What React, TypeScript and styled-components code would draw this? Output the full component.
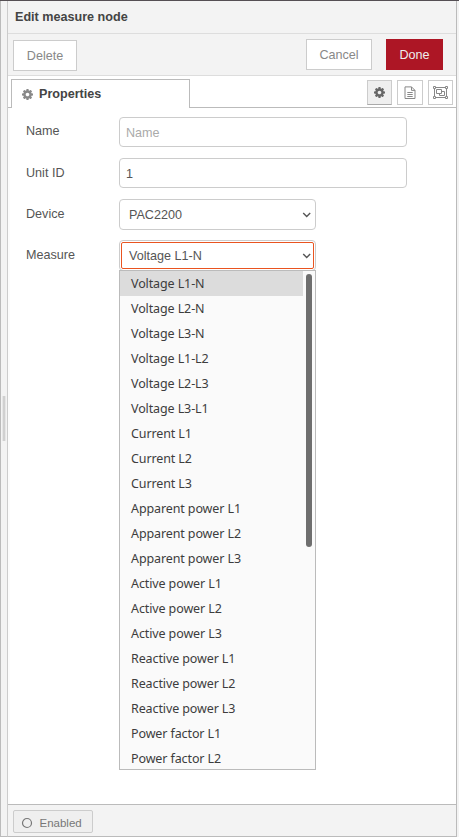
import React from "react";
import styled, { createGlobalStyle, css } from "styled-components";

const GlobalStyle = createGlobalStyle`
  * { box-sizing: border-box; }
  html, body { margin: 0; padding: 0; background: #f3f3f3; }
  body { font: 12.6px/20px "Liberation Sans", Arial, sans-serif; color: #555; overflow: hidden; }
  input, button { font: inherit; color: inherit; margin: 0; outline: none; }
`;

const Page = styled.div`
  display: flex;
  width: 459px;
  height: 837px;
  border-top: 1px solid #554f54;
  background: #f3f3f3;
`;

const Separator = styled.div`
  display: flex;
  align-items: center;
  width: 7px;
  border-left: 1px solid #bbb;
  border-bottom: 1px solid #bbb;
  padding-left: 1px;
`;

const Grip = styled.div`
  width: 4px;
  height: 45px;
  border: solid #e6e6e6;
  border-width: 0 1px;
  background: #d0d0d0;
`;

const Tray = styled.main`
  display: flex;
  flex-direction: column;
  width: 450px;
  border: 1px solid #bbb;
  border-left-color: #ccc;
  border-top: 0;
  background: #fff;
`;

const Header = styled.header`
  height: 33px;
  padding: 6px 7px;
  border-bottom: 1px solid #ddd;
  background: #f3f3f3;
  font-weight: bold;
  color: #444;
`;

const Toolbar = styled.div`
  display: flex;
  height: 42px;
  padding: 5px 13px 0 5px;
  border-bottom: 1px solid #ddd;
  background: #f3f3f3;
`;

const Button = styled.button<{ $width: number; $primary?: boolean; $side?: "left" | "right" }>`
  width: ${(p) => p.$width}px;
  height: 31px;
  padding: 0;
  border: 1px solid ${(p) => (p.$primary ? "#ad1625" : "#ccc")};
  background: ${(p) => (p.$primary ? "#ad1625" : "#fff")};
  color: ${(p) => (p.$primary ? "#eee" : "#888")};
  ${(p) => p.$side === "left" && css`margin: 1px auto 0 0;`}
  ${(p) => p.$side === "right" && css`margin-left: 14px;`}
`;

const TabBar = styled.div`
  display: flex;
  height: 32px;
  padding: 3px 3px 0 3px;
  box-shadow: inset 0 -1px #bbb;
`;

const Tab = styled.div`
  display: flex;
  align-items: center;
  gap: 6px;
  width: 179px;
  height: 29px;
  margin-right: auto;
  padding-left: 10px;
  border: 1px solid #bbb;
  border-bottom: 0;
  background: #fff;
  font-weight: bold;
  color: #444;
  svg { color: #888; }
`;

const IconButton = styled.button<{ $selected?: boolean; $wide?: boolean }>`
  display: flex;
  align-items: center;
  justify-content: center;
  width: ${(p) => (p.$wide ? 26 : 25)}px;
  height: 25px;
  margin: 1px 0 0 5px;
  padding: 0;
  border: 1px solid #ccc;
  border-bottom-color: ${(p) => (p.$selected ? "#aaa" : "#ccc")};
  background: ${(p) => (p.$selected ? "#efefef" : "#fff")};
  color: ${(p) => (p.$selected ? "#666" : "#888")};
`;

const Form = styled.div`
  flex: 1;
  padding: 9px 18px 0;
  box-shadow: inset 2px 0 #fcfcfc;
`;

const Row = styled.div<{ $height: number }>`
  display: flex;
  height: ${(p) => p.$height}px;
`;

const Label = styled.label`
  width: 93px;
  padding-top: 4px;
  ${Row} + ${Row} & { padding-top: 5px; }
`;

const Input = styled.input`
  width: 288px;
  height: 30px;
  padding: 2px 6px 0;
  border: 1px solid #ccc;
  border-radius: 4px;
  background: #fff;
  &::placeholder { color: #aaa; opacity: 1; }
`;

const SelectWrap = styled.div`
  position: relative;
  width: 197px;
`;

const Select = styled.div<{ $focused?: boolean }>`
  display: flex;
  align-items: center;
  justify-content: space-between;
  height: 31px;
  padding: 0 4px 0 9px;
  border: 1px solid #ccc;
  border-radius: 4px;
  background: #fff;
  ${(p) =>
    p.$focused &&
    css`
      outline: 1px solid #e95420;
      outline-offset: -3px;
    `}
`;

const Menu = styled.div`
  position: absolute;
  z-index: 1;
  top: 30px;
  left: 0;
  display: flex;
  width: 197px;
  height: 500px;
  border: 1px solid #bbb;
  background: #fafafa;
  color: #3d3d3d;
  font: 12.5px/25px "Noto Sans", sans-serif;
  letter-spacing: -0.11px;
`;

const Options = styled.div`
  width: 183px;
  height: 498px;
  overflow: hidden;
`;

const Option = styled.div<{ $selected?: boolean }>`
  height: 25px;
  padding-left: 11px;
  background: ${(p) => (p.$selected ? "#dcdcdc" : "transparent")};
  white-space: nowrap;
`;

const ScrollThumb = styled.div`
  width: 6px;
  height: 273px;
  margin: 3px 0 0 3px;
  border-radius: 3px;
  background: #6e6e6e;
`;

const Footer = styled.footer`
  height: 32px;
  padding: 5px;
  border-top: 1px solid #bbb;
  background: #f3f3f3;
`;

const StateButton = styled.button`
  display: flex;
  align-items: center;
  gap: 7px;
  width: 80px;
  height: 23px;
  padding: 2px 0 0 6.5px;
  border: 1px solid #ccc;
  border-radius: 2px;
  background: #efefef;
  color: #777;
  font-size: 11.5px;
`;

const Gear = ({ size = 11 }: { size?: number }) => (
  <svg width={size} height={size} viewBox="0 -128 1536 1536" fill="currentColor" fillRule="evenodd">
    <path d="M1024 640q0 106-75 181t-181 75-181-75-75-181 75-181 181-75 181 75 75 181zm512-109v222q0 12-8 23t-20 13l-185 28q-19 54-39 91 35 50 107 138 10 12 10 25t-9 23q-27 37-99 108t-94 71q-12 0-26-9l-138-108q-44 23-91 38-16 136-29 186-7 28-36 28h-222q-14 0-24.5-8.5t-11.5-21.5l-28-184q-49-16-90-37l-141 107q-10 9-25 9-14 0-25-11-126-114-165-168-7-10-7-23 0-12 8-23 15-21 51-66.5t54-70.5q-27-50-41-99l-183-27q-13-2-21-12.5t-8-23.5v-222q0-12 8-23t19-13l186-28q14-46 39-92-40-57-107-138-10-12-10-24 0-10 9-23 26-36 98.5-107.5t94.5-71.5q13 0 26 10l138 107q44-23 91-38 16-136 29-186 7-28 36-28h222q14 0 24.5 8.5t11.5 21.5l28 184q49 16 90 37l142-107q9-9 24-9 13 0 25 10 129 119 165 170 7 8 7 22 0 12-8 23-15 21-51 66.5t-54 70.5q26 50 41 98l183 28q13 2 21 12.5t8 23.5z" />
  </svg>
);

const FileIcon = () => (
  <svg width="12" height="14" viewBox="0 0 12 14" fill="none" stroke="currentColor">
    <path d="M1 .9h6.5l3.5 3.5v8.1H1zM7.5.9v3.5H11M3.3 6.5h5.4M3.3 8.5h5.4M3.3 10.5h5.4" />
  </svg>
);

const GroupIcon = () => (
  <svg width="15" height="13" viewBox="0 0 15 13" fill="none" stroke="currentColor">
    <path d="M1.5 1.5h12v10h-12z" />
    <path d="M3.5 3.5h5v4h-5zM9 5.5h2.5v4h-5V8" />
    <path fill="#fff" d="M.5.5h2v2h-2zM12.5.5h2v2h-2zM.5 10.5h2v2h-2zM12.5 10.5h2v2h-2z" />
  </svg>
);

const Chevron = () => (
  <svg width="9" height="6" viewBox="0 0 9 6" fill="none" stroke="#555" strokeWidth="1.4">
    <path d="M1.2 1l3.5 3.4L8.2 1" />
  </svg>
);

const Circle = () => (
  <svg width="12" height="12" viewBox="0 0 12 12" fill="none" stroke="#777" strokeWidth="1.2">
    <circle cx="6" cy="6" r="4.5" />
  </svg>
);

const measures = [
  "Voltage L1-N", "Voltage L2-N", "Voltage L3-N",
  "Voltage L1-L2", "Voltage L2-L3", "Voltage L3-L1",
  "Current L1", "Current L2", "Current L3",
  "Apparent power L1", "Apparent power L2", "Apparent power L3",
  "Active power L1", "Active power L2", "Active power L3",
  "Reactive power L1", "Reactive power L2", "Reactive power L3",
  "Power factor L1", "Power factor L2",
];

export default function App() {
  return (
    <>
      <GlobalStyle />
      <Page>
        <Separator><Grip /></Separator>
        <Tray>
          <Header>Edit measure node</Header>
          <Toolbar>
            <Button $width={64} $side="left">Delete</Button>
            <Button $width={66}>Cancel</Button>
            <Button $width={57} $primary $side="right">Done</Button>
          </Toolbar>
          <TabBar>
            <Tab><Gear />Properties</Tab>
            <IconButton $selected aria-label="Properties"><Gear /></IconButton>
            <IconButton $wide aria-label="Description"><FileIcon /></IconButton>
            <IconButton aria-label="Appearance"><GroupIcon /></IconButton>
          </TabBar>
          <Form>
            <Row $height={41}>
              <Label>Name</Label>
              <Input placeholder="Name" />
            </Row>
            <Row $height={41}>
              <Label>Unit ID</Label>
              <Input defaultValue="1" />
            </Row>
            <Row $height={41}>
              <Label>Device</Label>
              <SelectWrap><Select>PAC2200<Chevron /></Select></SelectWrap>
            </Row>
            <Row $height={31}>
              <Label>Measure</Label>
              <SelectWrap>
                <Select $focused>Voltage L1-N<Chevron /></Select>
                <Menu>
                  <Options>
                    {measures.map((m, i) => (
                      <Option key={m} $selected={i === 0}>{m}</Option>
                    ))}
                  </Options>
                  <ScrollThumb />
                </Menu>
              </SelectWrap>
            </Row>
          </Form>
          <Footer>
            <StateButton><Circle />Enabled</StateButton>
          </Footer>
        </Tray>
      </Page>
    </>
  );
}
